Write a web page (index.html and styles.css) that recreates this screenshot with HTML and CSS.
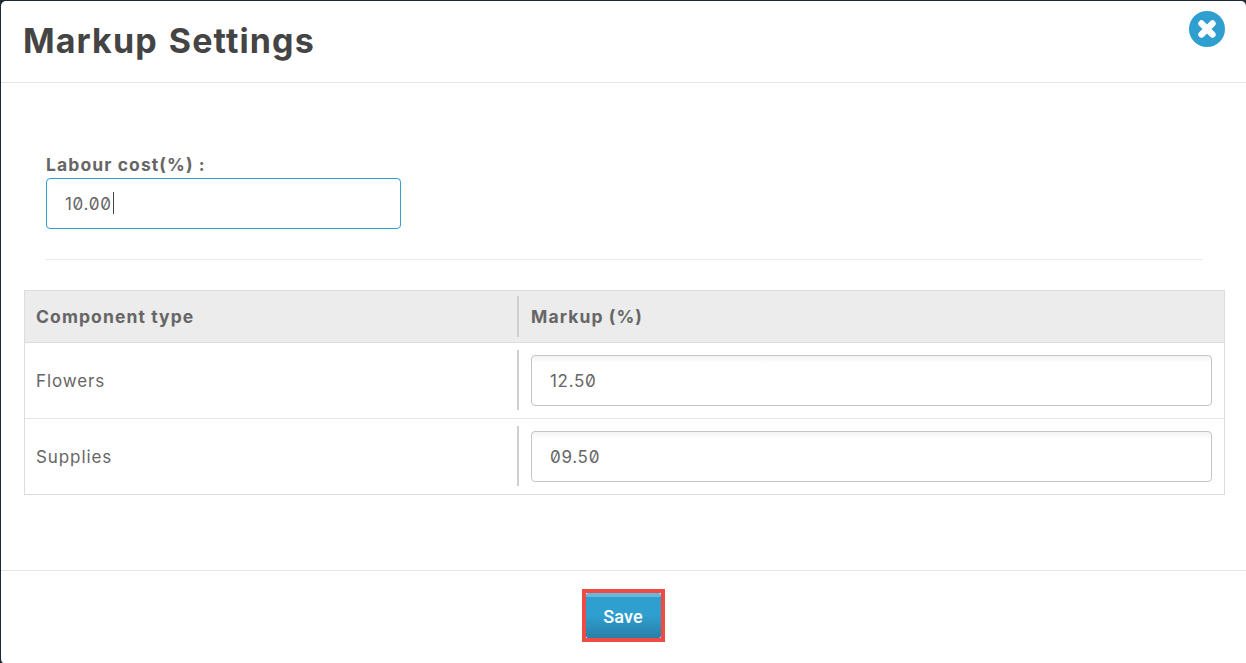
FILE: index.html
```html
<!DOCTYPE html>
<html lang="en">
<head>
<meta charset="utf-8">
<title>Markup Settings</title>
<link rel="stylesheet" href="styles.css">
</head>
<body>
<div class="modal">
  <header class="modal-header">
    <h1>Markup Settings</h1>
    <button class="close" aria-label="Close">
      <svg viewBox="0 0 36 36" width="36" height="36">
        <circle cx="18" cy="18" r="18" fill="#2e9fcf"/>
        <path d="M12.5 12.5 L23.5 23.5 M23.5 12.5 L12.5 23.5" stroke="#fff" stroke-width="6.4" stroke-linecap="round"/>
      </svg>
    </button>
  </header>
  <main class="modal-body">
    <div class="labour">
      <label for="labour">Labour cost(%) :</label>
      <div class="field">
        <input id="labour" class="input input-focus" type="text" value="10.00">
        <span class="caret"></span>
      </div>
    </div>
    <hr class="rule">
    <div class="table">
      <div class="row head">
        <div class="cell">Component type</div>
        <div class="cell"><div class="divided">Markup (%)</div></div>
      </div>
      <div class="row">
        <div class="cell">Flowers</div>
        <div class="cell cell-input"><div class="divided"><input class="input" type="text" value="12.50"></div></div>
      </div>
      <div class="row">
        <div class="cell">Supplies</div>
        <div class="cell cell-input"><div class="divided"><input class="input" type="text" value="09.50"></div></div>
      </div>
    </div>
  </main>
  <footer class="modal-footer">
    <div class="save-mark"><button class="save">Save</button></div>
  </footer>
</div>
</body>
</html>
```
FILE: styles.css
```css
* { box-sizing: border-box; }
html, body { height: 100%; }
body {
  margin: 0;
  background: #1d2a30;
  font-family: "Inter", "Liberation Sans", sans-serif;
  color: #666;
  overflow: hidden;
}
.modal {
  height: 663px;
  margin: 1px 0 0 1px;
  background: #fff;
  border-radius: 5px 5px 0 5px;
  display: flex;
  flex-direction: column;
}
.modal-header {
  height: 82px;
  flex: none;
  border-bottom: 1px solid #e5e5e5;
  display: flex;
  justify-content: space-between;
  align-items: flex-start;
  padding: 0 21.5px 0 22px;
}
.modal-header h1 {
  margin: 20px 0 0;
  font-size: 34px;
  line-height: 40px;
  font-weight: 700;
  color: #444;
  letter-spacing: 1.1px;
  word-spacing: 2px;
}
.close {
  border: 0;
  padding: 0;
  margin: 10px 0 0;
  background: none;
  width: 36px;
  height: 36px;
  display: block;
}
.close svg { display: block; }
.modal-body {
  height: 487px;
  flex: none;
  padding: 72px 21px 0 23px;
}
.labour { padding-left: 22px; }
.labour label {
  display: block;
  font-size: 17.5px;
  line-height: 20px;
  font-weight: 700;
  color: #666;
  letter-spacing: 1.1px;
  margin: 0 0 3px;
}
.field { position: relative; width: 355px; }
.input {
  display: block;
  width: 100%;
  height: 51px;
  padding: 0 18px;
  border: 1px solid #c4c4c4;
  border-radius: 4px;
  background: linear-gradient(#f3f3f3, #fff 7px);
  font-family: inherit;
  font-size: 17px;
  font-feature-settings: "zero" 1;
  letter-spacing: 0.7px;
  color: #666;
  outline: 0;
}
.input-focus {
  border-color: #2e9fcf;
  background: #fff;
}
.caret {
  position: absolute;
  left: 67px;
  top: 14px;
  width: 1px;
  height: 22px;
  background: #444;
}
.rule {
  margin: 30px 23px 30px 22px;
  border: 0;
  border-top: 1px solid #e9e9e9;
}
.table {
  border: 1px solid #dcdcdc;
}
.row {
  display: grid;
  grid-template-columns: 492px 1fr;
  height: 76px;
  border-top: 1px solid #e5e5e5;
  align-items: center;
  font-size: 17px;
  letter-spacing: 0.9px;
}
.row .cell:first-child { padding-left: 11px; }
.row .cell:last-child { padding-right: 12px; }
.divided {
  border-left: 2px solid #d0d0d0;
  height: 60px;
  padding-left: 12px;
  display: flex;
  align-items: center;
}
.cell-input {
  align-self: start;
  padding-top: 7px;
}
.cell-input .divided {
  align-items: flex-start;
  padding-top: 5px;
}
.head {
  height: 52px;
  border-top: 0;
  border-bottom: 1px solid #dcdcdc;
  background: #ececec;
  font-size: 17.5px;
  font-weight: 700;
  letter-spacing: 1.1px;
}
.head + .row { border-top: 0; height: 75px; }
.head .divided { height: 41px; }
.modal-footer {
  flex: 1;
  border-top: 1px solid #e5e5e5;
  display: flex;
  justify-content: center;
  padding: 18px 0 0 0;
  align-items: flex-start;
}
.save-mark {
  border: 4px solid #ef4b45;
  margin-left: -1px;
  line-height: 0;
}
.save {
  width: 75px;
  height: 45px;
  border: 0;
  border-top: 4px solid #6cb7d8;
  border-radius: 2px;
  background: linear-gradient(#2e9fcf 45%, #2a7fa8);
  color: #fff;
  font-family: "Roboto", "Liberation Sans", sans-serif;
  font-size: 18px;
  font-weight: 500;
  letter-spacing: 0.2px;
  padding: 0 0 2px;
}
```
